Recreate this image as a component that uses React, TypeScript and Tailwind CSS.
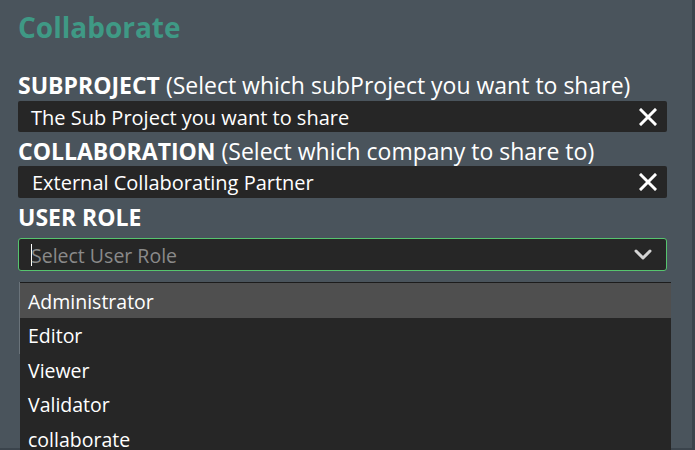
import React from "react";

const font = { fontFamily: '"Open Sans", "Noto Sans", sans-serif' };

function XIcon() {
  return (
    <svg width="18" height="18" viewBox="0 0 18 18" className="shrink-0">
      <path d="M2 2 L16 16 M16 2 L2 16" stroke="#ffffff" strokeWidth="3" strokeLinecap="square" />
    </svg>
  );
}

function Chevron() {
  return (
    <svg width="18" height="12" viewBox="0 0 18 12" className="shrink-0">
      <path d="M2 2 L9 9 L16 2" stroke="#d4d4d4" strokeWidth="3" fill="none" strokeLinecap="round" strokeLinejoin="round" />
    </svg>
  );
}

export default function App() {
  const items = ["Administrator", "Editor", "Viewer", "Validator", "collaborate"];
  return (
    <div className="h-[450px] w-full overflow-hidden flex flex-col bg-[#3b444c]" style={font}>
      <div className="flex flex-1 min-h-0">
        <div className="flex-1 bg-[#4a545c] pl-[18px] pr-[25px] pt-[8px]">
          <h1 className="text-[28px] font-bold leading-[38px] text-[#3f9985]">Collaborate</h1>
          <div className="mt-[27px] text-[23px] leading-[24px] text-white whitespace-nowrap">
            <span className="font-bold">SUBPROJECT</span> (Select which subProject you want to share)
          </div>
          <div className="mt-[4px] h-[31px] bg-[#262626] rounded-[2px] flex items-center pl-[13px] pr-[10px]">
            <span className="flex-1 pt-[3px] text-[20px] leading-[24px] text-white">The Sub Project you want to share</span>
            <XIcon />
          </div>
          <div className="mt-[7px] text-[23px] leading-[24px] text-white whitespace-nowrap">
            <span className="font-bold">COLLABORATION</span> (Select which company to share to)
          </div>
          <div className="mt-[3px] h-[32px] bg-[#262626] rounded-[2px] flex items-center pl-[14px] pr-[10px]">
            <span className="flex-1 pt-[2px] text-[20px] leading-[24px] text-white">External Collaborating Partner</span>
            <XIcon />
          </div>
          <div className="mt-[7px] text-[23px] leading-[24px] text-white font-bold">USER ROLE</div>
          <div className="relative mt-[9px]">
            <div className="h-[33px] bg-[#262626] rounded-[3px] border border-[#56c46e] flex items-center pl-[12px] pr-[14px]">
              <span className="w-[1px] h-[22px] bg-white mr-[-1px]"></span>
              <span className="flex-1 pt-[2px] text-[19.5px] leading-[24px] text-[#8a8a8a]">Select User Role</span>
              <Chevron />
            </div>
            <div className="absolute left-[1px] top-[44px] w-[1px] h-[72px] bg-[#6a737a]"></div>
            <div className="absolute left-[2px] right-[-4px] top-[44px] bg-[#262626] border-t border-[#1c1c1c]">
              {items.map((it, i) => (
                <div
                  key={it}
                  className={`h-[34.5px] flex items-center pl-[8px] pt-[2px] text-[19.5px] text-white ${i === 0 ? "bg-[#4f4f4f]" : ""}`}
                >
                  {it}
                </div>
              ))}
            </div>
          </div>
        </div>
        <div className="w-[3px] bg-[#3b444c]"></div>
      </div>
      <div className="h-[2px] bg-[#3b444c]"></div>
    </div>
  );
}
